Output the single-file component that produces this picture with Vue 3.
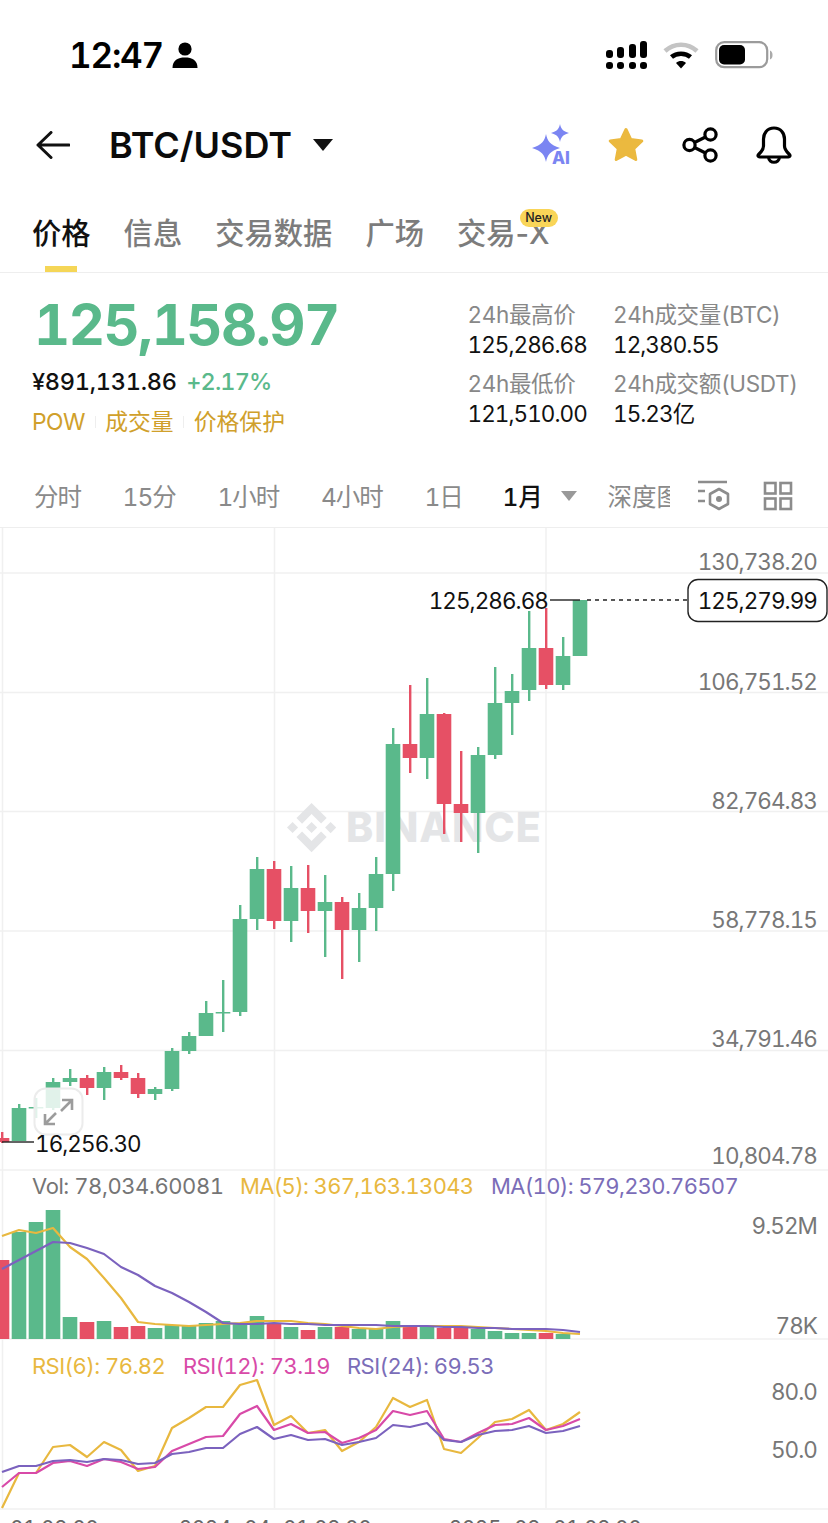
<script setup>
const GREEN = '#5AB98B'
const RED = '#E65065'
const candleRows = [
  ['r',1132,1138,1142,1143],['g',1104,1108,1141,1141],['g',1098,1107,1108,1118],['g',1078,1082,1108,1110],
  ['g',1069,1078,1082,1086],['r',1075,1078,1088,1095],['g',1067,1072,1088,1100],['r',1065,1072,1078,1080],
  ['r',1073,1078,1094,1098],['g',1087,1089,1094,1100],['g',1048,1051,1089,1091],['g',1032,1036,1051,1054],
  ['g',1001,1013,1036,1036],['g',980,1012,1013,1032],['g',905,919,1012,1016],['g',857,869,919,930],
  ['r',861,869,921,929],['g',866,888,921,942],['r',865,888,911,933],['g',875,902,911,957],
  ['r',897,902,930,979],['g',893,908,930,962],['g',857,874,908,931],['g',728,744,874,891],
  ['r',685,744,758,773],['g',678,714,758,779],['r',713,714,804,834],['r',751,804,813,842],
  ['g',747,755,813,853],['g',667,703,755,759],['g',674,691,703,735],['g',611,648,690,701],
  ['r',608,648,685,689],['g',637,656,685,690],['g',600,600,656,656]
]
const candles = candleRows.map((c, i) => ({
  x: 2 + i * 17, fill: c[0] === 'g' ? GREEN : RED, high: c[1], top: c[2], bottom: c[3], low: c[4]
}))
const volRows = [
  ['r',1260],['g',1232],['g',1222],['g',1210],['g',1317],['r',1322],['g',1321],['r',1327],['r',1326],
  ['g',1328],['g',1325],['g',1326],['g',1323],['g',1321],['g',1323],['g',1316],['r',1323],['g',1327],
  ['r',1330],['g',1327],['r',1327],['g',1329],['g',1329],['g',1321],['r',1327],['g',1327],['r',1328],
  ['r',1328],['g',1329],['g',1331],['g',1333],['g',1333],['r',1333],['g',1334]
]
const vols = volRows.map((v, i) => ({ x: 2 + i * 17, fill: v[0] === 'g' ? GREEN : RED, top: v[1] }))
const line = ys => ys.map((y, i) => `${2 + i * 17},${y}`).join(' ')
const ma5 = line([1236,1230,1233,1228,1247,1259,1278,1298,1322,1324,1325,1326,1325,1324,1323,1321,1321,1321,1323,1324,1326,1328,1329,1327,1326,1326,1326,1326,1327,1328,1329,1330,1331,1333,1334])
const ma10 = line([1269,1260,1251,1242,1243,1248,1254,1267,1275,1286,1293,1302,1312,1323,1324,1324,1323,1324,1324,1325,1325,1325,1325,1326,1326,1326,1327,1327,1328,1328,1329,1329,1329,1330,1332])
const rsi6 = line([1508,1473,1473,1447,1445,1457,1442,1450,1471,1466,1428,1418,1407,1407,1385,1380,1425,1416,1433,1430,1451,1442,1427,1398,1407,1400,1449,1453,1438,1422,1419,1410,1430,1424,1412])
const rsi12 = line([1487,1473,1473,1463,1461,1466,1459,1462,1469,1467,1451,1444,1437,1436,1414,1406,1430,1424,1433,1432,1443,1438,1430,1411,1415,1411,1439,1442,1433,1425,1424,1418,1430,1426,1419])
const rsi24 = line([1472,1466,1466,1461,1460,1462,1459,1460,1464,1463,1454,1452,1448,1448,1434,1427,1439,1435,1440,1439,1445,1442,1438,1425,1427,1423,1440,1442,1435,1431,1430,1426,1433,1431,1426])
const gridY = [573, 692.5, 811.5, 931, 1050.5, 1170, 1339, 1509]
const gridX = [2.5, 274.5, 546]
const priceLabels = [
  ['130,738.20', 570], ['106,751.52', 690], ['82,764.83', 809], ['58,778.15', 928], ['34,791.46', 1047], ['10,804.78', 1164],
  ['9.52M', 1234], ['78K', 1334], ['80.0', 1400], ['50.0', 1458]
]
const signal = [[606, 50, 8], [617, 47, 11], [629, 44, 14], [640, 41, 17]]
const tabs = ['信息', '交易数据', '广场']
const intervals = ['分时', '15分', '1小时', '4小时', '1日']
const stats = [
  ['24h最高价', '125,286.68'], ['24h成交量(BTC)', '12,380.55'],
  ['24h最低价', '121,510.00'], ['24h成交额(USDT)', '15.23亿']
]
const dates = [['2022-12-01 08:00', 2], ['2024-04-01 08:00', 275], ['2025-08-01 08:00', 545]]
</script>

<template>
  <div class="page">
    <div class="status">
      <div class="clock">
        <span>12:47</span>
        <svg class="person" viewBox="0 0 26 26" width="26" height="26">
          <circle cx="13" cy="7" r="6.6" fill="#000" />
          <path d="M0.5 26 C0.5 18 6 15.5 13 15.5 C20 15.5 25.5 18 25.5 26 Z" fill="#000" />
        </svg>
      </div>
      <div class="sys">
        <svg class="signal" viewBox="606 41 42 28" width="42" height="28">
          <template v-for="s in signal" :key="s[0]">
            <rect :x="s[0]" :y="s[1]" width="7" :height="s[2]" rx="3" fill="#000" />
            <rect :x="s[0]" y="62" width="7" height="7" rx="3" fill="#000" />
          </template>
        </svg>
        <svg class="wifi" viewBox="0 0 36 27" width="36" height="27">
          <path d="M2 9 C11 0.5 25 0.5 34 9" fill="none" stroke="#c4c4c4" stroke-width="4.5" />
          <path d="M8.5 15 C13.5 10.5 22.5 10.5 27.5 15" fill="none" stroke="#000" stroke-width="4.5" />
          <path d="M13 21 L18 26.5 L23 21 C20 18.4 16 18.4 13 21 Z" fill="#000" />
        </svg>
        <svg class="battery" viewBox="0 0 58 28" width="58" height="28">
          <rect x="1.2" y="1.2" width="51" height="25" rx="8" fill="none" stroke="#9b9b9b" stroke-width="2.2" />
          <rect x="4" y="4" width="26" height="19.5" rx="5" fill="#000" />
          <path d="M55 9.5 C57 10.5 57.5 12 57.5 14 C57.5 16 57 17.5 55 18.5 Z" fill="#aaa" />
        </svg>
      </div>
    </div>

    <div class="nav">
      <svg class="back" viewBox="0 0 34 28" width="34" height="28">
        <path d="M33 14 H2 M15 1.5 L2 14 L15 26.5" fill="none" stroke="#111" stroke-width="3" stroke-linecap="round" stroke-linejoin="round" />
      </svg>
      <span class="pair">BTC/USDT</span>
      <span class="caret"></span>
      <div class="nav-icons">
        <svg viewBox="0 0 42 42" width="42" height="42" class="ai">
          <path d="M15 10 C16.5 17 19 20.8 29 24 C19 27 16.5 31 15 38 C13.5 31 11 27 1 24 C11 20.8 13.5 17 15 10 Z" fill="#7B85F2" />
          <path d="M29 0 C30 5 32 7.2 38 9 C32 10.8 30 13 29 18 C28 13 26 10.8 20 9 C26 7.2 28 5 29 0 Z" fill="#7B85F2" />
          <text x="21" y="40" class="ai-text">AI</text>
        </svg>
        <svg viewBox="0 0 38 38" width="38" height="38" class="fav">
          <path d="M19 3.5 L23.8 13.6 L34.8 15 L26.7 22.6 L28.8 33.5 L19 28.2 L9.2 33.5 L11.3 22.6 L3.2 15 L14.2 13.6 Z" fill="#EBB93F" stroke="#EBB93F" stroke-width="3" stroke-linejoin="round" />
        </svg>
        <svg viewBox="0 0 36 36" width="36" height="36" class="share">
          <g fill="none" stroke="#000" stroke-width="3.2">
            <circle cx="7.5" cy="18" r="5.6" />
            <circle cx="28.5" cy="7.5" r="5.6" />
            <circle cx="28.5" cy="28.5" r="5.6" />
            <path d="M12.5 15.5 L23.5 10 M12.5 20.5 L23.5 26" />
          </g>
        </svg>
        <svg viewBox="0 0 36 38" width="36" height="38" class="bell">
          <g fill="none" stroke="#000" stroke-width="3.2" stroke-linejoin="round">
            <path d="M18 2 C11 2 7.5 7.5 7.5 13 V20 C7.5 24 5 26 2.5 28.5 C1.5 29.6 2.2 31 3.6 31 H32.4 C33.8 31 34.5 29.6 33.5 28.5 C31 26 28.5 24 28.5 20 V13 C28.5 7.5 25 2 18 2 Z" />
            <path d="M12.5 31 C13 38 23 38 23.5 31" />
          </g>
        </svg>
      </div>
    </div>

    <div class="tabs">
      <div class="tab active">价格<i class="bar"></i></div>
      <div v-for="t in tabs" :key="t" class="tab">{{ t }}</div>
      <div class="tab">交易-X<b class="new">New</b></div>
    </div>

    <div class="summary">
      <div class="left">
        <div class="big">125,158.97</div>
        <div class="sub"><span>¥891,131.86</span><em>+2.17%</em></div>
        <div class="tags">
          <span class="pow">POW</span><i></i><span>成交量</span><i></i><span>价格保护</span>
        </div>
      </div>
      <div class="stats">
        <div v-for="s in stats" :key="s[0]" class="stat">
          <div class="k">{{ s[0] }}</div>
          <div class="v">{{ s[1] }}</div>
        </div>
      </div>
    </div>

    <div class="intervals">
      <span v-for="i in intervals" :key="i" class="iv">{{ i }}</span>
      <span class="iv cur">1月</span>
      <span class="tri"></span>
      <span class="depth">深度图</span>
      <svg viewBox="0 0 34 34" width="34" height="34" class="depth-ic">
        <g fill="none" stroke="#8c8c8c" stroke-width="2.6">
          <path d="M1 3 H30 M1 12 H8 M1 22 H8" />
          <path d="M22 10 L31 15 V25 L22 30 L13 25 V15 Z" stroke-linejoin="round" />
        </g>
        <circle cx="22" cy="20" r="3" fill="#8c8c8c" />
      </svg>
      <svg viewBox="0 0 30 30" width="30" height="30" class="grid-ic">
        <g fill="none" stroke="#8c8c8c" stroke-width="2.6">
          <rect x="2" y="2" width="10.5" height="10.5" />
          <rect x="17.5" y="2" width="10.5" height="10.5" />
          <rect x="2" y="17.5" width="10.5" height="10.5" />
          <rect x="17.5" y="17.5" width="10.5" height="10.5" />
        </g>
      </svg>
    </div>

    <div class="chart">
      <svg viewBox="0 528 828 995" width="828" height="995" class="plot">
        <line v-for="y in gridY" :key="y" x1="0" x2="828" :y1="y" :y2="y" class="grid" />
        <line v-for="x in gridX" :key="x" :x1="x" :x2="x" y1="528" y2="1508" class="grid" />

        <g transform="translate(287 803) scale(2.05)">
          <path fill="#E4E5E7" d="M16.624 13.9202l2.7175 2.7154-7.353 7.353-7.353-7.352 2.7175-2.7164 4.6355 4.6595 4.6356-4.6595zm4.6366-4.6366L24 12l-2.7154 2.7164L18.5682 12l2.6924-2.7164zm-9.272.001l2.7163 2.6914-2.7164 2.7174v-.001L9.2721 12l2.7164-2.7154zm-9.2722-.001L5.4088 12l-2.6914 2.6924L0 12l2.7164-2.7164zM11.9885.0115l7.353 7.329-2.7174 2.7154-4.6356-4.6356-4.6355 4.6595-2.7174-2.7154 7.353-7.353z" />
        </g>
        <text x="346" y="842" class="mark">BINANCE</text>

        <g v-for="c in candles" :key="c.x">
          <rect :x="c.x - 1" :y="c.high" width="2.4" :height="c.low - c.high" :fill="c.fill" />
          <rect :x="c.x - 7.3" :y="c.top" width="14.6" :height="Math.max(c.bottom - c.top, 1.5)" :fill="c.fill" />
        </g>

        <rect v-for="v in vols" :key="'v' + v.x" :x="v.x - 7.3" :y="v.top" width="14.6" :height="1339 - v.top" :fill="v.fill" />
        <polyline :points="ma5" class="ln" stroke="#E8B83F" />
        <polyline :points="ma10" class="ln" stroke="#7B62BE" />
        <polyline :points="rsi6" class="ln" stroke="#E8B83F" />
        <polyline :points="rsi12" class="ln" stroke="#D84AA8" />
        <polyline :points="rsi24" class="ln" stroke="#7B62BE" />

        <rect x="34.5" y="1088.5" width="48" height="46" rx="11" fill="#fff" fill-opacity="0.82" stroke="#ececec" stroke-width="2" />
        <g fill="none" stroke="#9c9c9c" stroke-width="2.6">
          <path d="M62 1100 H72 V1110 M72 1100 L61 1111" />
          <path d="M45 1114 V1124 H55 M45 1124 L56 1113" />
        </g>

        <text v-for="p in priceLabels" :key="p[0]" x="817" :y="p[1]" class="axis">{{ p[0] }}</text>

        <line x1="550" x2="580" y1="600" y2="600" stroke="#222" stroke-width="1.4" />
        <line x1="587" x2="688" y1="600" y2="600" stroke="#222" stroke-width="1.4" stroke-dasharray="4 4" />
        <text x="548" y="609" class="dark end">125,286.68</text>
        <rect x="688" y="579.5" width="139" height="42" rx="10" fill="#fff" stroke="#222" stroke-width="1.4" />
        <text x="817" y="609" class="dark end">125,279.99</text>
        <line x1="2" x2="34" y1="1142" y2="1142" stroke="#222" stroke-width="1.4" />
        <text x="35" y="1152" class="dark">16,256.30</text>

        <text x="32" y="1194" class="legend vol" fill="#757575">Vol: 78,034.60081</text>
        <text x="240" y="1194" class="legend ma" fill="#E8B83F">MA(5): 367,163.13043</text>
        <text x="491" y="1194" class="legend ma" fill="#7B6DB8">MA(10): 579,230.76507</text>
        <text x="32" y="1374" class="legend" fill="#E8B83F">RSI(6): 76.82</text>
        <text x="183" y="1374" class="legend" fill="#D84AA8">RSI(12): 73.19</text>
        <text x="347" y="1374" class="legend" fill="#7B6DB8">RSI(24): 69.53</text>

        <text v-for="d in dates" :key="d[0]" :x="d[1]" y="1536" class="date">{{ d[0] }}</text>
      </svg>
    </div>
  </div>
</template>

<style scoped>
.page {
  width: 828px;
  height: 1523px;
  overflow: hidden;
  background: #fff;
  font-family: Inter, "Noto Sans CJK SC", sans-serif;
  font-feature-settings: "tnum";
  color: #111;
}
svg { flex: none; }
.status {
  height: 100px;
  display: flex;
  align-items: flex-start;
  justify-content: space-between;
  padding: 41px 55px 0 69px;
  box-sizing: border-box;
}
.clock {
  display: flex;
  align-items: center;
  gap: 9px;
  height: 28px;
  font-size: 35px;
  font-weight: 600;
  letter-spacing: -1.2px;
  color: #000;
}
.sys { display: flex; align-items: center; gap: 15px; height: 28px; }
.battery { margin-left: 1px; }
.nav {
  height: 90px;
  display: flex;
  align-items: center;
  padding-left: 36px;
  padding-right: 36px;
}
.pair {
  margin-left: 39px;
  font-size: 36px;
  font-weight: 600;
  color: #0b0b0b;
}
.caret {
  margin-left: 21px;
  width: 0;
  height: 0;
  border-left: 10px solid transparent;
  border-right: 10px solid transparent;
  border-top: 12px solid #111;
}
.nav-icons { margin-left: auto; display: flex; align-items: center; gap: 37px; }
.nav-icons .fav { margin-left: -3px; }
.nav-icons .bell { margin-left: 1px; }
.ai-text { font-size: 17px; font-weight: 800; fill: #7B85F2; }
.tabs {
  height: 83px;
  display: flex;
  align-items: center;
  gap: 33px;
  padding-left: 32px;
  box-sizing: border-box;
  border-bottom: 1.5px solid #eeeeee;
  font-size: 29.3px;
  color: #7c7c7c;
  font-weight: 500;
  font-feature-settings: normal;
}
.tab { position: relative; white-space: nowrap; }
.tab.active { color: #111; }
.bar {
  position: absolute;
  left: 13px;
  bottom: -20px;
  width: 32px;
  height: 6px;
  background: #F5D657;
}
.new {
  position: absolute;
  right: -8px;
  top: -1px;
  width: 38px;
  height: 18px;
  border-radius: 9px;
  background: #F9D558;
  color: #222;
  font-size: 12.5px;
  font-weight: 500;
  text-align: center;
  line-height: 18px;
}
.summary {
  height: 167px;
  display: flex;
  box-sizing: border-box;
  padding: 26px 0 0 32px;
}
.left { width: 435.5px; }
.big {
  font-size: 56px;
  font-weight: 700;
  line-height: 52px;
  letter-spacing: -1.5px;
  color: #5AB98B;
  margin-left: 2px;
}
.sub {
  margin-top: 16px;
  font-size: 23.5px;
  font-weight: 500;
  display: flex;
  gap: 9.5px;
  line-height: 30px;
  letter-spacing: -0.25px;
}
.sub em { font-style: normal; color: #5AB98B; letter-spacing: -0.9px; }
.tags {
  margin-top: 8px;
  display: flex;
  align-items: center;
  font-size: 22.8px;
  color: #D0A02B;
  line-height: 34px;
}
.pow { letter-spacing: -0.5px; }
.tags i { width: 1px; height: 12px; margin: 0 9.6px; background: #eee; }
.stats {
  margin-top: 1px;
  display: grid;
  grid-template-columns: 145.5px auto;
  grid-auto-rows: 68.5px;
}
.stat .k { font-size: 22.5px; color: #888; line-height: 30px; white-space: nowrap; letter-spacing: -0.35px; }
.stat .v { font-size: 22.5px; color: #111; line-height: 30px; white-space: nowrap; letter-spacing: -0.95px; }
.intervals {
  height: 88px;
  box-sizing: border-box;
  border-bottom: 1.5px solid #eeeeee;
  display: flex;
  align-items: center;
  gap: 41.6px;
  padding: 24px 0 0 34px;
  font-size: 24.5px;
  color: #8a8a8a;
}
.iv { white-space: nowrap; letter-spacing: -1px; }
.cur { margin-left: -2px; color: #111; font-weight: 500; letter-spacing: 0; }
.tri {
  margin-left: -23px;
  width: 0;
  height: 0;
  border-left: 8px solid transparent;
  border-right: 8px solid transparent;
  border-top: 10px solid #999;
}
.depth {
  margin-left: -11.6px;
  width: 63px;
  overflow: hidden;
  white-space: nowrap;
  flex: none;
}
.depth-ic { margin-left: -14.6px; }
.grid-ic { margin-left: -9.6px; }
.chart { height: 995px; }
.plot { display: block; }
.grid { stroke: #f0f0f0; stroke-width: 1.5; }
.ln { fill: none; stroke-width: 2.2; stroke-linejoin: round; }
.mark { font-size: 41px; font-weight: 800; fill: #E4E5E7; letter-spacing: 1px; }
.axis { font-size: 22.5px; fill: #777; text-anchor: end; letter-spacing: -0.95px; }
.dark { font-size: 22.5px; fill: #111; letter-spacing: -0.95px; }
.end { text-anchor: end; }
.legend { font-size: 22px; letter-spacing: -0.55px; }
.legend.vol { letter-spacing: -0.43px; }
.legend.ma { letter-spacing: -0.68px; }
.date { font-size: 21px; fill: #666; text-anchor: middle; letter-spacing: -0.6px; }
</style>
